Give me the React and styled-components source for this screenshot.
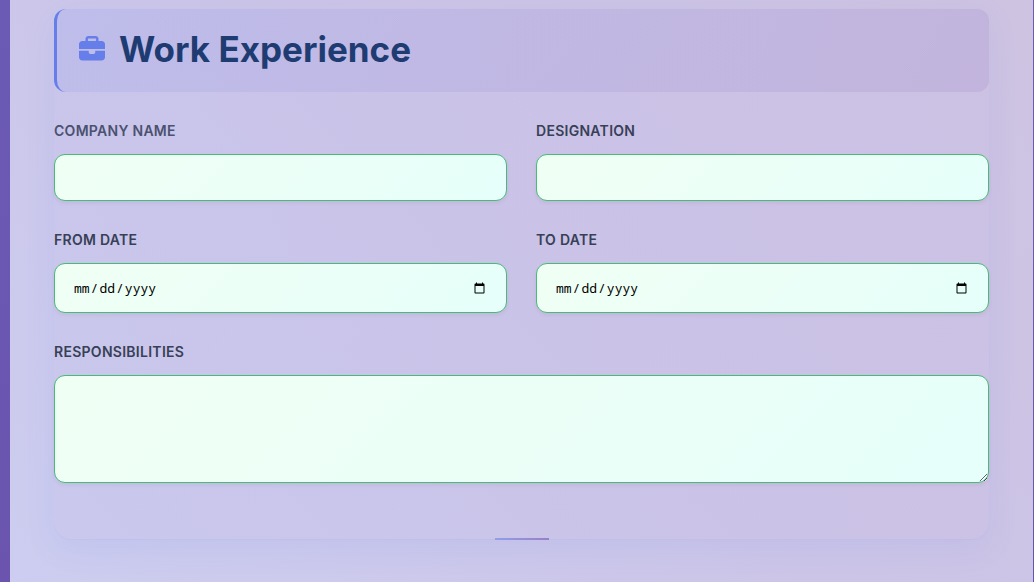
import React from 'react';
import styled, { createGlobalStyle } from 'styled-components';
import { FaBriefcase } from 'react-icons/fa6';

const GlobalStyle = createGlobalStyle`
  *, *::before, *::after { box-sizing: border-box; }
  body {
    margin: 0;
    font-family: Inter, "Liberation Sans", sans-serif;
    background: #6a55af;
  }
`;

const Page = styled.div`
  display: flex;
  min-height: 100vh;
  padding: 0 1px 0 10px;
  background: linear-gradient(180deg, #6b5bb5, #6a54ae);
`;

const Container = styled.main`
  flex: 1;
  padding: 9px 44px 42px;
  background: linear-gradient(45deg, #cccdf0 0%, #ccc5e8 50%, #cec3e1 100%);
`;

const Section = styled.form`
  display: flex;
  flex-direction: column;
  border-radius: 17px;
  background: linear-gradient(135deg, rgba(195, 192, 236, 0.3), rgba(200, 188, 228, 0.3));
  box-shadow: 0 8px 30px rgba(102, 126, 234, 0.1), inset 0 -1px 0 rgba(170, 184, 238, 0.35);
`;

const SectionHeader = styled.header`
  display: flex;
  align-items: center;
  gap: 14px;
  padding: 19px 22px 22px;
  border-left: 3px solid #667eea;
  border-radius: 12px;
  color: #667eea;
  font-size: 26px;
  background: linear-gradient(135deg, rgba(102, 126, 234, 0.11), rgba(118, 75, 162, 0.11));
`;

const Title = styled.h2`
  margin: 0;
  color: #1e3c72;
  font-size: 35px;
  line-height: 42px;
  font-weight: 700;
`;

const Fields = styled.div`
  display: grid;
  grid-template-columns: repeat(2, minmax(0, 1fr));
  gap: 29px;
  padding: 29px 0 55px;
`;

const Field = styled.div`
  display: flex;
  flex-direction: column;
  gap: 13px;
  grid-column: ${({ $wide }) => ($wide ? '1 / -1' : 'auto')};
`;

const Label = styled.label`
  color: ${({ $muted }) => ($muted ? '#4a5270' : '#374056')};
  font-size: 14px;
  line-height: 20px;
  font-weight: 600;
  letter-spacing: 0.02em;
  text-transform: uppercase;
`;

const Input = styled.input`
  width: 100%;
  height: ${({ type }) => (type === 'date' ? '50px' : '47px')};
  padding: 0 18px;
  border: 1px solid #48bb78;
  border-radius: 11px;
  outline: none;
  color: #000;
  font-family: ${({ type }) => (type === 'date' ? '"Noto Sans Mono", "DejaVu Sans Mono", monospace' : 'inherit')};
  font-size: 13px;
  background: linear-gradient(135deg, #f0fff4, #e6fffa);
  box-shadow: 0 2px 4px rgba(0, 0, 0, 0.06);
`;

const TextArea = styled.textarea`
  display: block;
  width: 100%;
  height: 108px;
  padding: 14px 18px;
  border: 1px solid #48bb78;
  border-radius: 11px;
  outline: none;
  resize: vertical;
  font-family: inherit;
  font-size: 14px;
  background: linear-gradient(135deg, #f0fff4, #e6fffa);
  box-shadow: 0 2px 4px rgba(0, 0, 0, 0.06);
`;

const Accent = styled.div`
  align-self: center;
  width: 54px;
  height: 2px;
  background: linear-gradient(90deg, #919fe9, #9a7fc5);
`;

const fields = [
  { id: 'company', label: 'Company Name', type: 'text', muted: true },
  { id: 'designation', label: 'Designation', type: 'text' },
  { id: 'from', label: 'From Date', type: 'date' },
  { id: 'to', label: 'To Date', type: 'date' },
];

export default function App() {
  return (
    <>
      <GlobalStyle />
      <Page>
        <Container>
          <Section>
            <SectionHeader>
              <FaBriefcase aria-hidden="true" />
              <Title>Work Experience</Title>
            </SectionHeader>
            <Fields>
              {fields.map(({ id, label, type, muted }) => (
                <Field key={id}>
                  <Label htmlFor={id} $muted={muted}>{label}</Label>
                  <Input id={id} name={id} type={type} />
                </Field>
              ))}
              <Field $wide>
                <Label htmlFor="responsibilities">Responsibilities</Label>
                <TextArea id="responsibilities" name="responsibilities" />
              </Field>
            </Fields>
            <Accent />
          </Section>
        </Container>
      </Page>
    </>
  );
}
